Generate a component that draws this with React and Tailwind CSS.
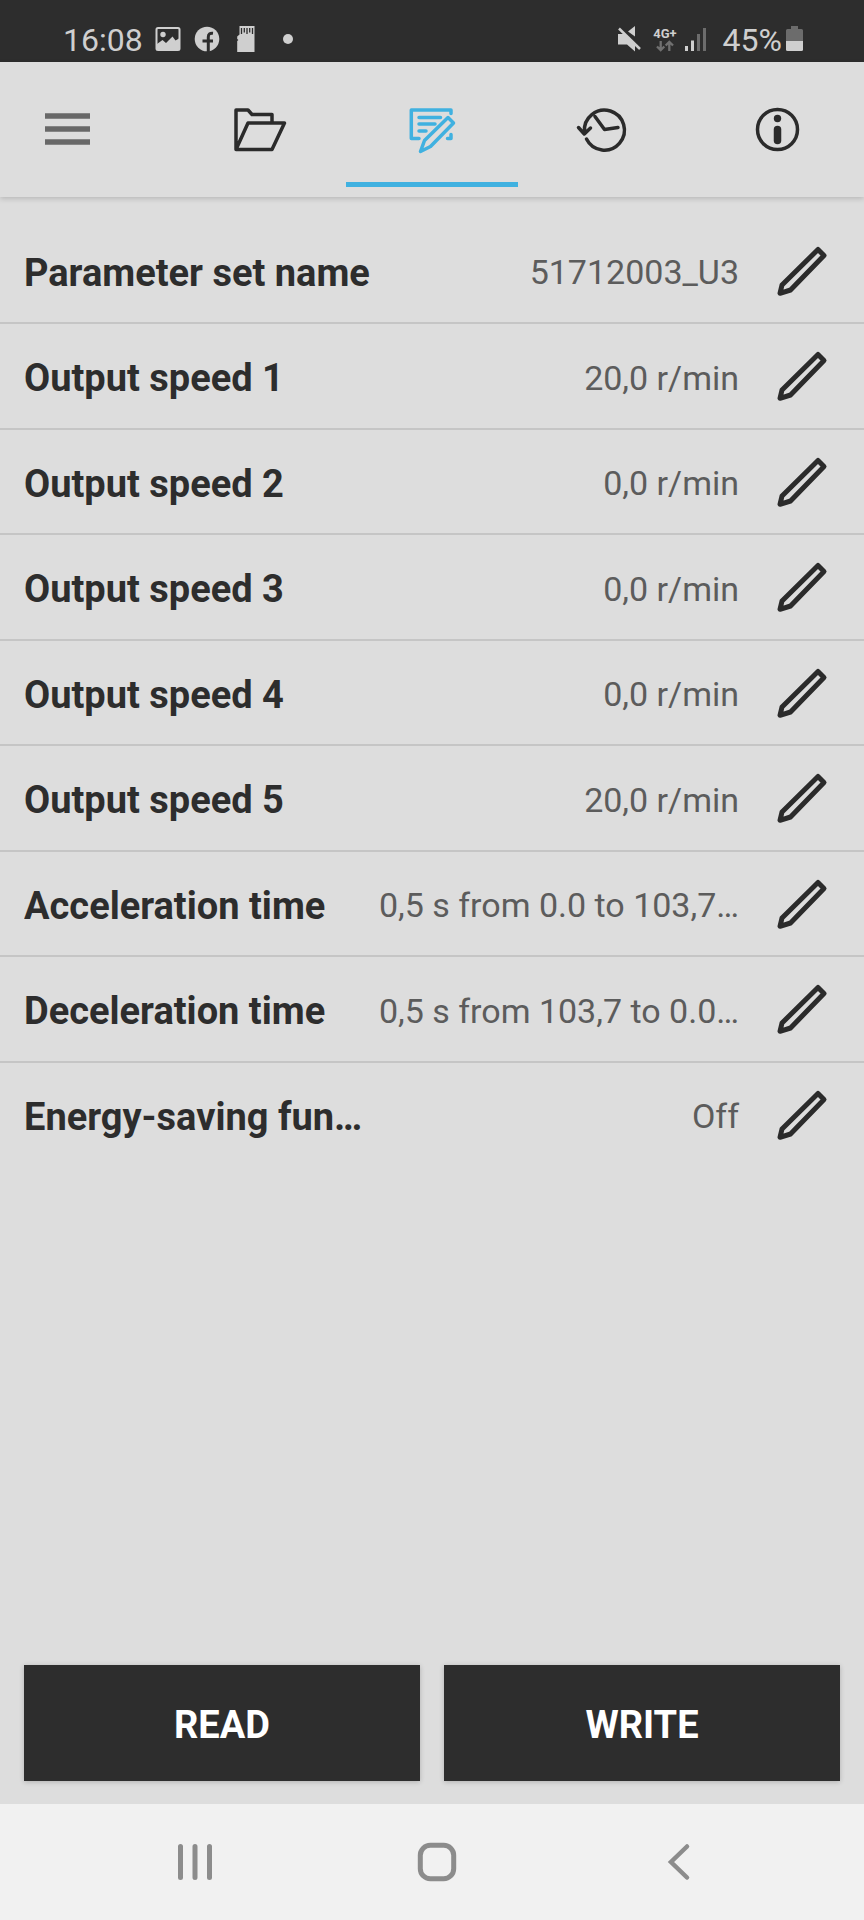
import React from "react";

const parameters = [
  ["Parameter set name", "51712003_U3"],
  ["Output speed 1", "20,0 r/min"],
  ["Output speed 2", "0,0 r/min"],
  ["Output speed 3", "0,0 r/min"],
  ["Output speed 4", "0,0 r/min"],
  ["Output speed 5", "20,0 r/min"],
  ["Acceleration time", "0,5 s from 0.0 to 103,7…"],
  ["Deceleration time", "0,5 s from 103,7 to 0.0…"],
  ["Energy-saving fun…", "Off"],
];

function StatusBar() {
  return (
    <div className="flex h-[62px] items-center justify-between bg-[#2d2d2d] pt-4 pr-[61px] pl-[63px] text-[32px] leading-[46px] text-[#cfcfcf]">
      <div className="flex items-center">
        <span className="pt-[2px]">16:08</span>
        <svg className="ml-[12px] h-[26px] w-[26px]" viewBox="0 0 26 26" aria-hidden="true">
          <rect x="1.5" y="2" width="23" height="22" rx="1.5" fill="none" stroke="currentColor" strokeWidth="2" />
          <circle cx="8" cy="8.500" r="2.700" fill="currentColor" />
          <path d="M2 18 L7.500 14 L11 17 L17.500 10.500 L20.500 14.500 L24 12.500 V24 H2Z" fill="currentColor" />
        </svg>
        <svg className="ml-[13px] h-[26px] w-[26px]" viewBox="0 0 26 26" aria-hidden="true">
          <circle cx="13" cy="13" r="12.300" fill="currentColor" />
          <path d="M14.300 26 V11 Q14.300 6.700 19 7.200 M8.500 15 H19" fill="none" stroke="#2d2d2d" strokeWidth="3" />
        </svg>
        <svg className="ml-[16px] h-[26px] w-[20px]" viewBox="0 0 20 26" aria-hidden="true">
          <path d="M3.500 0 H18.500 V26 H1.200 V15 L2.400 14 L1.200 13 V10.500 L3.500 8.500Z" fill="currentColor" />
          <path d="M5.500 2 V8 M8.300 2 V6.500 M11 2 V8 M13.700 2 V6.500 M16.500 2 V8" stroke="#2d2d2d" strokeWidth="1.300" />
        </svg>
        <span className="ml-[27px] h-[10px] w-[10px] rounded-full bg-[#cfcfcf]" />
      </div>
      <div className="flex items-center">
        <svg className="h-[26px] w-[26px]" viewBox="0 0 26 26" aria-hidden="true">
          <path d="M2 8 H8 L19 19 V25.500 L11 18.500 H2Z M12 5.500 L19 0 V10.500Z" fill="currentColor" />
          <path d="M4.500 0.800 L25.500 21.300" stroke="#2d2d2d" strokeWidth="2" />
          <path d="M3 2.500 L24 23" stroke="currentColor" strokeWidth="2.500" />
        </svg>
        <div className="ml-[11px] flex flex-col items-center">
          <span className="text-[13px] leading-[13px] font-bold">4G+</span>
          <svg className="h-[12px] w-[18px] text-[#707070]" viewBox="0 0 18 12" aria-hidden="true">
            <path d="M4.700 1 V9.500 M1 6.500 L4.700 10.200 L8.300 6.500 M13.300 11 V2.500 M9.700 5.500 L13.300 1.800 L17 5.500" fill="none" stroke="currentColor" strokeWidth="2.300" />
          </svg>
        </div>
        <svg className="ml-[7px] h-[26px] w-[24px]" viewBox="0 0 24 26" aria-hidden="true">
          <path d="M2.500 20 V25 M8.500 14.500 V25" stroke="currentColor" strokeWidth="3" />
          <path d="M14.500 8 V25 M20.500 2 V25" stroke="#6c6c6c" strokeWidth="3" />
        </svg>
        <span className="ml-[15px] pt-[2px]">45%</span>
        <svg className="ml-[4px] h-[26px] w-[17px]" viewBox="0 0 17 26" aria-hidden="true">
          <path d="M5 0 H12 V3 H15.500 Q17 3 17 4.500 V15 H0 V4.500 Q0 3 1.500 3 H5Z" fill="#6c6c6c" />
          <path d="M0 15 H17 V23.500 Q17 25 15.500 25 H1.500 Q0 25 0 23.500Z" fill="currentColor" />
        </svg>
      </div>
    </div>
  );
}

function TabIcon({ children }) {
  return (
    <svg
      className="h-[61px] w-[61px]"
      viewBox="0 0 61 61"
      fill="none"
      stroke="currentColor"
      strokeWidth="3.500"
      strokeLinecap="round"
      strokeLinejoin="round"
      aria-hidden="true"
    >
      {children}
    </svg>
  );
}

function Header() {
  const tab = "flex items-center justify-center border-y-[5px] border-transparent";
  return (
    <header className="relative grid h-[135px] grid-cols-5 pb-[10px] pt-[10px] text-[#2b2b2b] shadow-[0_2px_5px_rgba(0,0,0,0.16)]">
      <button type="button" aria-label="Menu" className="flex items-center pb-[2px] pl-[45px]">
        <svg className="h-8 w-[45px]" viewBox="0 0 45 32" aria-hidden="true">
          <path d="M0 3 H45 M0 16 H45 M0 29 H45" stroke="#686868" strokeWidth="5.300" />
        </svg>
      </button>
      <button type="button" aria-label="Open" className={tab}>
        <TabIcon>
          <path d="M7 50.500 V11 H19 L23 15.500 H43 V23 M7 50.500 L19 24 H55.500 L43 50.500Z" />
        </TabIcon>
      </button>
      <button
        type="button"
        aria-label="Edit parameters"
        aria-current="page"
        className="flex items-center justify-center border-y-[5px] border-t-transparent border-b-[#40b1e0] text-[#40b1e0]"
      >
        <TabIcon>
          <path d="M18 39.500 H10.300 V11 H50 V14.500 M50 35.500 V39.500 H46.500 M18 18.500 H39.500 M18 25 H34 M18 32 H25" />
          <path d="M19.500 52.500 L23.500 41.500 L47 18.500 L52.500 24 L29.500 47.500Z" />
        </TabIcon>
      </button>
      <button type="button" aria-label="History" className={tab}>
        <TabIcon>
          <path d="M12.500 40 A20 20 0 1 0 10.500 33 V34.500 M4.500 28.500 L10.300 35 L16.500 29 M21 17.500 L30.500 30.500 L44 28.500" />
        </TabIcon>
      </button>
      <button type="button" aria-label="Information" className={tab}>
        <TabIcon>
          <circle cx="30.500" cy="30.500" r="20" />
          <circle cx="30.500" cy="19.500" r="3.700" fill="currentColor" stroke="none" />
          <path d="M30.500 30.500 V41.500" strokeWidth="7.500" />
        </TabIcon>
      </button>
    </header>
  );
}

function ParameterRow({ name, value }) {
  return (
    <li className="flex h-[105px] items-center border-b-2 border-[#c5c5c5] pr-6 pl-6 last:border-transparent even:h-[106px]">
      <span className="flex-1 truncate pt-1 text-[38px] leading-[50px] font-bold text-[#2d2d2d]">{name}</span>
      <span className="mr-[21px] pt-[3px] text-[34px] leading-[50px] whitespace-nowrap text-[#5c5c5c]">{value}</span>
      <button type="button" aria-label={"Edit " + name} className="h-20 w-20 shrink-0 text-[#2b2b2b]">
        <svg className="h-20 w-20" viewBox="0 0 80 80" fill="none" stroke="currentColor" strokeWidth="5" strokeLinejoin="round" aria-hidden="true">
          <path d="M20 62.300 L22 54 L58 18.500 L64 24.500 L30.500 59Z" />
        </svg>
      </button>
    </li>
  );
}

export default function App() {
  const action =
    "h-[116px] flex-1 bg-[#2d2d2d] pt-1 text-[38px] font-bold text-white shadow-[0_1px_5px_rgba(0,0,0,0.2)]";
  const navIcon = "h-[40px] w-[40px]";
  return (
    <div className="flex min-h-screen flex-col bg-[#dddddd] font-[Roboto,sans-serif]">
      <StatusBar />
      <Header />
      <main className="flex flex-1 flex-col justify-between">
        <ul className="pt-[22px]">
          {parameters.map(([name, value]) => (
            <ParameterRow key={name} name={name} value={value} />
          ))}
        </ul>
        <div className="flex gap-6 px-6 pb-[23px]">
          <button type="button" className={action}>READ</button>
          <button type="button" className={action}>WRITE</button>
        </div>
      </main>
      <nav className="grid h-[116px] grid-cols-3 bg-[#f1f1f1] pr-[64px] pl-[74px] text-[#8c8c8c]">
        <button type="button" aria-label="Recent apps" className="flex items-center justify-center">
          <svg className={navIcon} viewBox="0 0 40 40" fill="none" stroke="currentColor" strokeWidth="5" strokeLinecap="round" aria-hidden="true">
            <path d="M5.500 4.500 V35.500 M20 4.500 V35.500 M34.500 4.500 V35.500" />
          </svg>
        </button>
        <button type="button" aria-label="Home" className="flex items-center justify-center">
          <svg className={navIcon} viewBox="0 0 40 40" fill="none" stroke="currentColor" strokeWidth="5" aria-hidden="true">
            <rect x="3.300" y="3.300" width="33.400" height="33.400" rx="10" />
          </svg>
        </button>
        <button type="button" aria-label="Back" className="flex items-center justify-center">
          <svg className={navIcon} viewBox="0 0 40 40" fill="none" stroke="currentColor" strokeWidth="4.500" strokeLinecap="round" aria-hidden="true">
            <path d="M28 4.500 L12 20 L28 35.500" />
          </svg>
        </button>
      </nav>
    </div>
  );
}
